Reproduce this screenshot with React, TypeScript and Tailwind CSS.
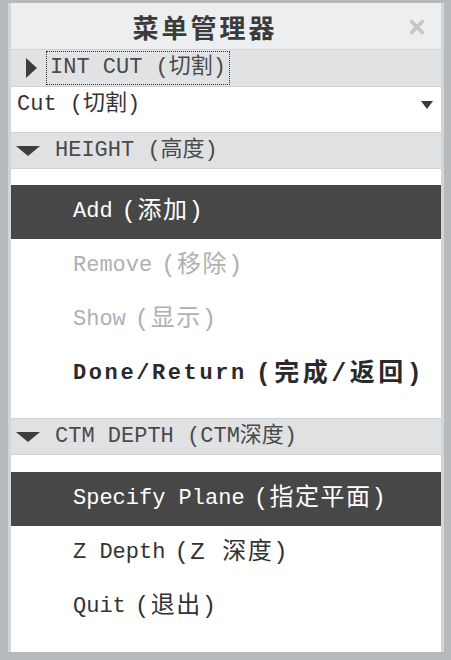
import { X } from "lucide-react";

const mono = "font-['Liberation_Mono','Noto_Sans_CJK_SC',monospace]";

type MenuItem = {
  en: string;
  zh: string;
  tone?: "active" | "disabled" | "bold";
};

const heightItems: MenuItem[] = [
  { en: "Add", zh: "(添加)", tone: "active" },
  { en: "Remove", zh: "(移除)", tone: "disabled" },
  { en: "Show", zh: "(显示)", tone: "disabled" },
  { en: "Done/Return", zh: "(完成/返回)", tone: "bold" },
];

const depthItems: MenuItem[] = [
  { en: "Specify Plane", zh: "(指定平面)", tone: "active" },
  { en: "Z Depth", zh: "(Z 深度)" },
  { en: "Quit", zh: "(退出)" },
];

function itemClass(tone?: MenuItem["tone"]) {
  return [
    "flex h-[54px] shrink-0 items-center gap-[9px] pl-[62px] text-[22px] leading-none whitespace-nowrap",
    tone === "active"
      ? "bg-[#474747] text-white"
      : tone === "disabled"
        ? "text-[#b0b0b0]"
        : tone === "bold"
          ? "font-bold text-[#2a2a2a]"
          : "text-[#333]",
  ].join(" ");
}

function MenuRow({ item }: { item: MenuItem }) {
  const bold = item.tone === "bold";
  return (
    <div className={itemClass(item.tone)}>
      <span className={bold ? "tracking-[2.6px]" : ""}>{item.en}</span>
      <span className={bold ? "text-[25px] tracking-[3.5px]" : "text-[24px] tracking-[1.5px]"}>{item.zh}</span>
    </div>
  );
}

function DownTriangle() {
  return (
    <svg width="26" height="12" viewBox="0 0 26 12" className="shrink-0">
      <path d="M1 1 L25 1 L13 11 Z" fill="#3d3d3d" />
    </svg>
  );
}

function SectionHeader({ label }: { label: string }) {
  return (
    <div className="flex h-[37px] shrink-0 items-center gap-[14px] border-y border-[#cfd2d4] bg-[#dfe1e2] pl-[4px]">
      <DownTriangle />
      <span className="text-[22px] leading-none text-[#4a4a4a]">{label}</span>
    </div>
  );
}

export default function App() {
  return (
    <div className={`flex h-[660px] w-[451px] flex-col bg-[#b6babc] pb-[8px] pl-[8px] pr-[7px] pt-[3px] ${mono}`}>
      <div className="flex flex-1 flex-col border-x-[3px] border-[#d3d6d8] bg-white">
        <div className="relative flex h-[46px] shrink-0 items-center justify-center bg-[#eceeef] pr-[42px]">
          <span className="font-['Noto_Sans_CJK_SC',serif] text-[26px] font-bold tracking-[3px] text-[#3b3b3b]">
            菜单管理器
          </span>
          <X size={22} strokeWidth={4} className="absolute right-[13px] top-[13px] text-[#c4c6c7]" />
        </div>

        <div className="flex h-[38px] shrink-0 items-center gap-[8px] border-y border-[#cfd2d4] bg-[#e0e2e3] pl-[14px]">
          <svg width="13" height="22" viewBox="0 0 13 22" className="shrink-0">
            <path d="M1 1 L12 11 L1 21 Z" fill="#3d3d3d" />
          </svg>
          <span className="flex h-[34px] items-center border border-dotted border-[#333] px-[3px] text-[22px] leading-none text-[#4a4a4a]">
            INT CUT (切割)
          </span>
        </div>

        <div className="flex h-[35px] shrink-0 items-center justify-between pl-[6px] pr-[8px]">
          <span className="text-[22px] leading-none text-[#333]">Cut (切割)</span>
          <svg width="12" height="8" viewBox="0 0 12 8">
            <path d="M0 0 L12 0 L6 8 Z" fill="#3a3a3a" />
          </svg>
        </div>

        <div className="h-[10px] shrink-0" />
        <SectionHeader label="HEIGHT (高度)" />
        <div className="h-[16px] shrink-0" />

        {heightItems.map((item) => (
          <MenuRow key={item.en} item={item} />
        ))}

        <div className="h-[17px] shrink-0" />
        <SectionHeader label="CTM DEPTH (CTM深度)" />
        <div className="h-[17px] shrink-0" />

        {depthItems.map((item) => (
          <MenuRow key={item.en} item={item} />
        ))}

        <div className="flex-1" />
      </div>
    </div>
  );
}
